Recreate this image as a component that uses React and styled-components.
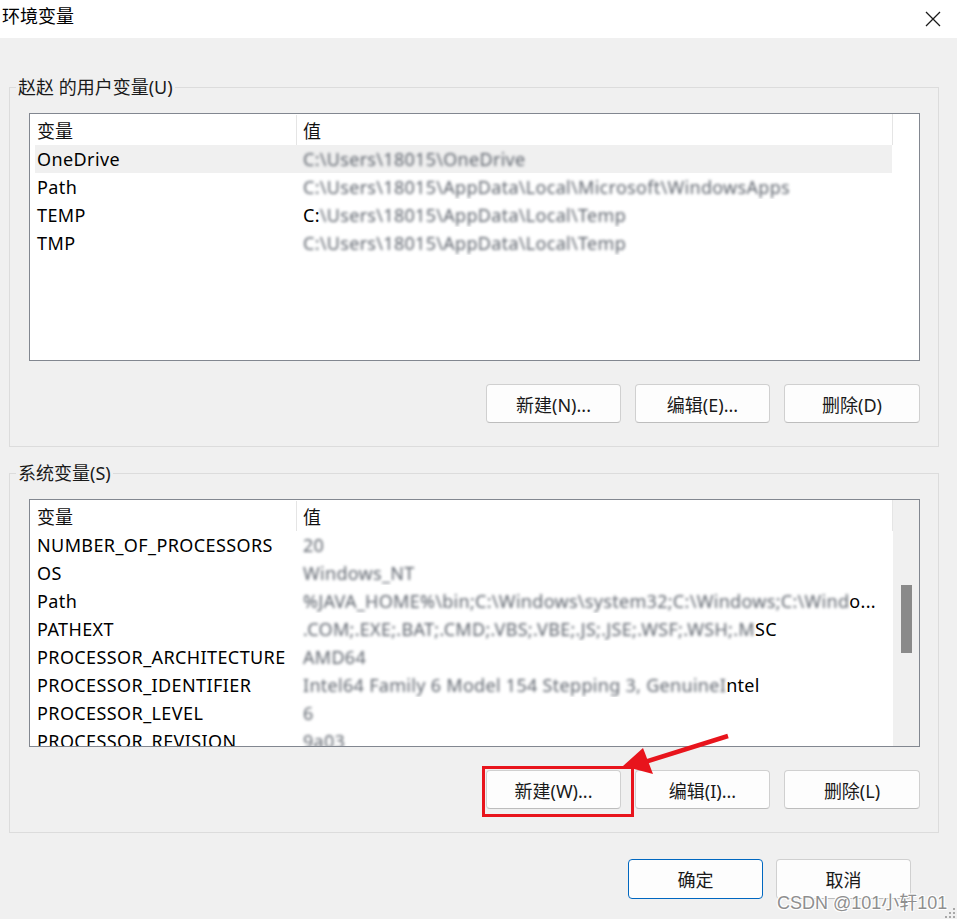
import React from 'react';
import styled, { createGlobalStyle } from 'styled-components';

const GlobalStyle = createGlobalStyle`
  html, body {
    margin: 0;
    padding: 0;
    background: #f0f0f0;
  }
  * {
    box-sizing: border-box;
  }
`;

const Window = styled.div`
  position: relative;
  width: 957px;
  height: 919px;
  overflow: hidden;
  background: #f0f0f0;
  display: flex;
  flex-direction: column;
  font-family: "Noto Sans", "Noto Sans CJK SC", sans-serif;
  font-size: 18px;
  color: #000;
`;

const TitleBar = styled.div`
  height: 38px;
  flex-shrink: 0;
  background: #fff;
  display: flex;
  align-items: center;
  justify-content: space-between;
  padding: 0 16px 0 2px;
`;

const Title = styled.span`
  font-size: 18px;
  line-height: 1;
  margin-top: -6px;
`;

const Body = styled.div`
  display: flex;
  flex-direction: column;
  padding: 37px 18px 0 9px;
`;

const Group = styled.fieldset`
  margin: 0;
  min-width: 0;
  padding: 14px 18px 23px 19px;
  border: 1px solid #dcdcdc;

  & + & {
    margin-top: 14px;
  }
`;

const Legend = styled.legend`
  padding: 0 2px;
  margin-left: -13px;
  line-height: 24px;
  font-size: 18px;
  color: #1a1a1a;
`;

const List = styled.div`
  height: 248px;
  border: 1px solid #828790;
  background: #fff;
  display: flex;
  overflow: hidden;
  letter-spacing: 0.3px;
`;

const ListBody = styled.div`
  flex: 1;
  padding-left: 5px;
  display: flex;
  flex-direction: column;
  min-width: 0;
`;

const Header = styled.div`
  display: grid;
  grid-template-columns: 261px 1fr;
  height: 31px;
  flex-shrink: 0;
  border-right: 1px solid #e5e5e5;
  letter-spacing: 0;
`;

const HeaderCell = styled.div`
  display: flex;
  align-items: center;
  padding-left: ${p => (p.$value ? '6px' : '2px')};
  border-left: ${p => (p.$value ? '1px solid #e5e5e5' : 'none')};
  margin-top: 1px;
  color: #111;
`;

const Row = styled.div`
  display: grid;
  grid-template-columns: 261px 1fr;
  height: 28px;
  flex-shrink: 0;
  align-items: center;
  background: ${p => (p.$selected ? '#f0f0f0' : 'transparent')};
  margin-right: 1px;
`;

const NameCell = styled.div`
  padding-left: 2px;
  white-space: nowrap;
  letter-spacing: 0.4px;
`;

const ValueCell = styled.div`
  padding-left: 7px;
  white-space: nowrap;
  overflow: hidden;
`;

const Blurred = styled.span`
  color: #5e646d;
  filter: blur(1.4px);
`;

const Scroll = styled.div`
  width: 26px;
  flex-shrink: 0;
  background: ${p => (p.$track ? '#f0f0f0' : '#fff')};
`;

const Thumb = styled.div`
  width: 11px;
  height: 68px;
  margin-left: 8px;
  background: #8a8a8a;
`;

const ButtonRow = styled.div`
  display: flex;
  justify-content: flex-end;
  gap: 14px;
  margin-top: 23px;
`;

const Button = styled.button`
  width: ${p => (p.$wide ? '136px' : '135px')};
  height: ${p => (p.$tall ? '40px' : '39px')};
  border: 1px solid ${p => (p.$primary ? '#0067c0' : '#d0d0d0')};
  border-bottom-color: ${p => (p.$primary ? '#0067c0' : '#bdbdbd')};
  border-radius: 4px;
  background: #fdfdfd;
  font-family: inherit;
  font-size: 18px;
  color: #1a1a1a;
  padding: 0;
`;

const Footer = styled.div`
  display: flex;
  justify-content: flex-end;
  gap: 13px;
  margin-top: 26px;
  padding-right: 28px;
`;

const RedBox = styled.div`
  position: absolute;
  left: 482px;
  top: 766px;
  width: 152px;
  height: 51px;
  border: 3px solid #e8141c;
`;

const Arrow = styled.svg`
  position: absolute;
  left: 600px;
  top: 725px;
`;

const Watermark = styled.div`
  position: absolute;
  left: 777px;
  top: 888px;
  font-family: "Liberation Sans", "Noto Sans CJK SC", sans-serif;
  font-size: 18px;
  color: #8f8f8f;
  text-shadow: 1px 1px 0 #fff, -1px -1px 0 #fff, 1px -1px 0 #fff, -1px 1px 0 #fff;
  white-space: nowrap;
`;

const Grip = styled.svg`
  position: absolute;
  right: 1px;
  bottom: 0;
`;

const userVars = [
  { name: 'OneDrive', blur: 'C:\\Users\\18015\\OneDrive', selected: true },
  { name: 'Path', blur: 'C:\\Users\\18015\\AppData\\Local\\Microsoft\\WindowsApps' },
  { name: 'TEMP', clearStart: 'C:', blur: '\\Users\\18015\\AppData\\Local\\Temp' },
  { name: 'TMP', blur: 'C:\\Users\\18015\\AppData\\Local\\Temp' },
];

const systemVars = [
  { name: 'NUMBER_OF_PROCESSORS', blur: '20' },
  { name: 'OS', blur: 'Windows_NT' },
  { name: 'Path', blur: '%JAVA_HOME%\\bin;C:\\Windows\\system32;C:\\Windows;C:\\Wind', clearEnd: 'o...' },
  { name: 'PATHEXT', blur: '.COM;.EXE;.BAT;.CMD;.VBS;.VBE;.JS;.JSE;.WSF;.WSH;.M', clearEnd: 'SC' },
  { name: 'PROCESSOR_ARCHITECTURE', blur: 'AMD64' },
  { name: 'PROCESSOR_IDENTIFIER', blur: 'Intel64 Family 6 Model 154 Stepping 3, GenuineI', clearEnd: 'ntel' },
  { name: 'PROCESSOR_LEVEL', blur: '6' },
  { name: 'PROCESSOR_REVISION', blur: '9a03' },
];

const VarList = ({ items, scrollbar }) => (
  <List>
    <ListBody>
      <Header>
        <HeaderCell>变量</HeaderCell>
        <HeaderCell $value>值</HeaderCell>
      </Header>
      {items.map(v => (
        <Row key={v.name} $selected={v.selected}>
          <NameCell>{v.name}</NameCell>
          <ValueCell>
            {v.clearStart}
            <Blurred>{v.blur}</Blurred>
            {v.clearEnd}
          </ValueCell>
        </Row>
      ))}
    </ListBody>
    <Scroll $track={scrollbar}>
      {scrollbar && <Thumb style={{ marginTop: 85 }} />}
    </Scroll>
  </List>
);

const App = () => (
  <>
    <GlobalStyle />
    <Window>
      <TitleBar>
        <Title>环境变量</Title>
        <svg width="16" height="16" viewBox="0 0 16 16">
          <path d="M1 1 L15 15 M15 1 L1 15" stroke="#1a1a1a" strokeWidth="1.3" />
        </svg>
      </TitleBar>
      <Body>
        <Group>
          <Legend>赵赵 的用户变量(U)</Legend>
          <VarList items={userVars} />
          <ButtonRow>
            <Button>新建(N)...</Button>
            <Button>编辑(E)...</Button>
            <Button $wide>删除(D)</Button>
          </ButtonRow>
        </Group>
        <Group>
          <Legend>系统变量(S)</Legend>
          <VarList items={systemVars} scrollbar />
          <ButtonRow>
            <Button>新建(W)...</Button>
            <Button>编辑(I)...</Button>
            <Button $wide>删除(L)</Button>
          </ButtonRow>
        </Group>
        <Footer>
          <Button $primary $tall>确定</Button>
          <Button $tall>取消</Button>
        </Footer>
      </Body>

      <RedBox />
      <Arrow width="140" height="60" viewBox="0 0 140 60">
        <line x1="128" y1="11" x2="45" y2="37" stroke="#e8141c" strokeWidth="4.5" />
        <polygon points="23,41 43,23 53,49" fill="#e8141c" />
      </Arrow>
      <Watermark>CSDN @101小轩101</Watermark>
      <Grip width="11" height="11" viewBox="0 0 11 11">
        {[[8, 0], [4, 4], [8, 4], [0, 8], [4, 8], [8, 8]].map(([x, y]) => (
          <rect key={`${x}-${y}`} x={x} y={y} width="2" height="2" fill="#a8a8a8" />
        ))}
      </Grip>
    </Window>
  </>
);

export default App;
